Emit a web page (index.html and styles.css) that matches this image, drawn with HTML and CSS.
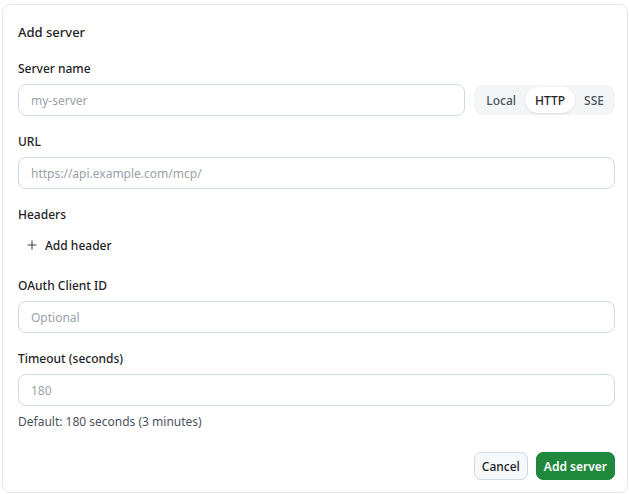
FILE: index.html
```html
<!DOCTYPE html>
<html lang="en">
<head>
<meta charset="utf-8">
<title>Add server</title>
<link rel="stylesheet" href="styles.css">
</head>
<body>
<div class="card">
  <h2 class="title">Add server</h2>
  <div class="form">
    <div class="field">
      <label class="label">Server name</label>
      <div class="row">
        <input class="input" type="text" placeholder="my-server">
        <div class="seg">
          <button class="seg-btn">Local</button>
          <button class="seg-btn active">HTTP</button>
          <button class="seg-btn">SSE</button>
        </div>
      </div>
    </div>
    <div class="field">
      <label class="label">URL</label>
      <input class="input" type="text" placeholder="https://api.example.com/mcp/">
    </div>
    <div class="field">
      <label class="label">Headers</label>
      <button class="add-btn">
        <svg class="plus" width="10" height="10" viewBox="0 0 10 10"><path d="M5 0.5v9M0.5 5h9" stroke="#3d444d" stroke-width="1.1" fill="none"/></svg>
        <span>Add header</span>
      </button>
    </div>
    <div class="field">
      <label class="label">OAuth Client ID</label>
      <input class="input" type="text" placeholder="Optional">
    </div>
    <div class="field">
      <label class="label">Timeout (seconds)</label>
      <input class="input" type="text" placeholder="180">
      <p class="hint">Default: 180 seconds (3 minutes)</p>
    </div>
  </div>
  <div class="footer">
    <button class="btn">Cancel</button>
    <button class="btn primary">Add server</button>
  </div>
</div>
</body>
</html>
```
FILE: styles.css
```css
* { box-sizing: border-box; }
html, body { margin: 0; padding: 0; background: #ffffff; }
body {
  font-family: "Noto Sans", "Open Sans", sans-serif;
  color: #1f2328;
  padding: 4px 1px 0 2px;
}
.card {
  border: 1px solid #e3e6ea;
  border-radius: 8px;
  padding: 17px 12px 12px 15px;
  height: 489px;
  display: flex;
  flex-direction: column;
}
.title {
  margin: 0 0 18px;
  font-size: 13px;
  line-height: 20px;
  font-weight: 500;
}
.form {
  display: flex;
  flex-direction: column;
  gap: 17px;
}
.field { display: flex; flex-direction: column; }
.label {
  font-size: 12px;
  line-height: 16px;
  font-weight: 500;
  padding-top: 1px;
  margin-bottom: 7px;
}
.row { display: flex; gap: 9px; align-items: center; }
.input {
  height: 32px;
  border: 1px solid #d1d9e0;
  border-radius: 8px;
  padding: 0 12px;
  font-family: inherit;
  font-size: 12px;
  color: #1f2328;
  background: #fff;
  width: 100%;
  outline: none;
}
.row .input { flex: 1; width: auto; min-width: 0; }
.input::placeholder { color: #9aa1a9; }
.seg {
  display: flex;
  background: #f4f5f7;
  border-radius: 9px;
  padding: 2px;
  height: 30px;
}
.seg-btn {
  border: 0;
  background: transparent;
  font-family: inherit;
  font-size: 12px;
  font-weight: 500;
  color: #4b535d;
  padding: 0 10px;
  border-radius: 13px;
  cursor: pointer;
}
.seg-btn:first-child { padding: 0 9px 0 10px; }
.seg-btn:last-child { padding: 0 9px; }
.seg-btn.active {
  background: #fff;
  color: #1f2328;
  box-shadow: 0 1px 2px rgba(31, 35, 40, 0.12);
}
.add-btn {
  align-self: flex-start;
  display: flex;
  align-items: center;
  gap: 8px;
  height: 30px;
  margin-top: 0;
  padding: 0 8px 0 9px;
  border: 0;
  background: transparent;
  font-family: inherit;
  font-size: 12px;
  font-weight: 500;
  color: #1f2328;
}
.plus { flex: none; }
.hint {
  margin: 8px 0 0;
  font-size: 12px;
  line-height: 16px;
  color: #4b535d;
}
.footer {
  margin-top: auto;
  display: flex;
  justify-content: flex-end;
  gap: 8px;
}
.btn {
  height: 28px;
  padding: 0 7px;
  border: 1px solid #d1d9e0;
  border-radius: 7px;
  background: #f6f8fa;
  font-family: inherit;
  font-size: 12px;
  font-weight: 500;
  color: #1f2328;
}
.btn.primary {
  background: #1f883d;
  border-color: #1f883d;
  color: #fff;
  font-weight: 600;
}
```
